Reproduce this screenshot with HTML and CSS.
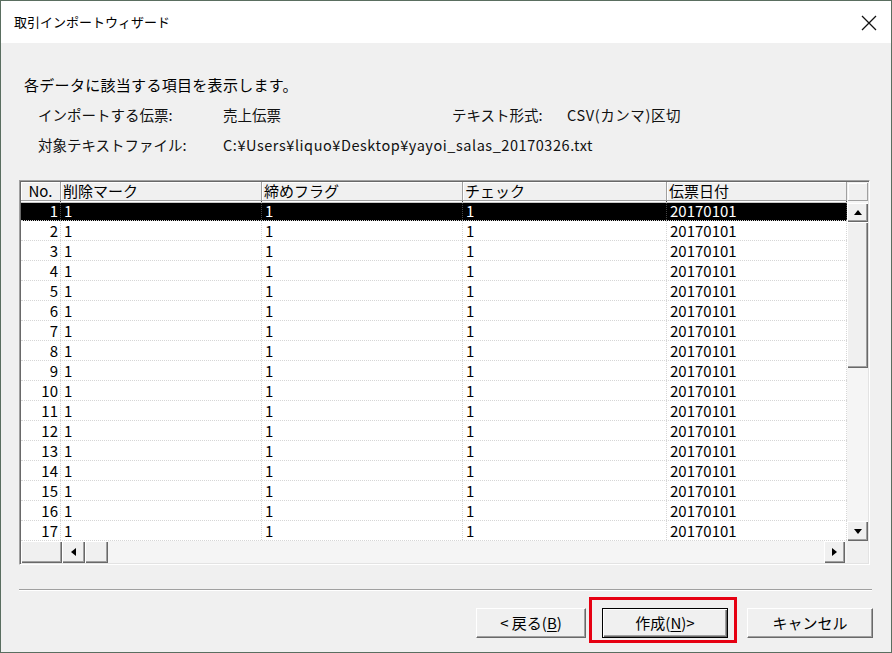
FILE: index.html
```html
<!DOCTYPE html>
<html lang="ja">
<head>
<meta charset="utf-8">
<title>取引インポートウィザード</title>
<link rel="stylesheet" href="styles.css">
</head>
<body>
<div class="window">
  <div class="titlebar">
    <span class="title">取引インポートウィザード</span>
    <svg class="close" width="16" height="16" viewBox="0 0 16 16"><path d="M1 1 L15 15 M15 1 L1 15" stroke="#111" stroke-width="1.3" fill="none"/></svg>
  </div>
  <div class="body">
    <p class="intro">各データに該当する項目を表示します。</p>
    <div class="info">
      <span>インポートする伝票:</span><span>売上伝票</span><span>テキスト形式:</span><span class="csv">CSV(カンマ)区切</span>
    </div>
    <div class="info">
      <span>対象テキストファイル:</span><span class="wide">C:¥Users¥liquo¥Desktop¥yayoi_salas_20170326.txt</span>
    </div>
    <div class="grid">
      <div class="ghead">
        <span class="hc hnum">No.</span><span class="hc">削除マーク</span><span class="hc">締めフラグ</span><span class="hc">チェック</span><span class="hc">伝票日付</span>
      </div>
      <div class="hcorner"></div>
      <div class="rows">
        <div class="row sel"><span class="c num">1</span><span class="c">1</span><span class="c">1</span><span class="c">1</span><span class="c">20170101</span></div>
        <div class="row"><span class="c num">2</span><span class="c">1</span><span class="c">1</span><span class="c">1</span><span class="c">20170101</span></div>
        <div class="row"><span class="c num">3</span><span class="c">1</span><span class="c">1</span><span class="c">1</span><span class="c">20170101</span></div>
        <div class="row"><span class="c num">4</span><span class="c">1</span><span class="c">1</span><span class="c">1</span><span class="c">20170101</span></div>
        <div class="row"><span class="c num">5</span><span class="c">1</span><span class="c">1</span><span class="c">1</span><span class="c">20170101</span></div>
        <div class="row"><span class="c num">6</span><span class="c">1</span><span class="c">1</span><span class="c">1</span><span class="c">20170101</span></div>
        <div class="row"><span class="c num">7</span><span class="c">1</span><span class="c">1</span><span class="c">1</span><span class="c">20170101</span></div>
        <div class="row"><span class="c num">8</span><span class="c">1</span><span class="c">1</span><span class="c">1</span><span class="c">20170101</span></div>
        <div class="row"><span class="c num">9</span><span class="c">1</span><span class="c">1</span><span class="c">1</span><span class="c">20170101</span></div>
        <div class="row"><span class="c num">10</span><span class="c">1</span><span class="c">1</span><span class="c">1</span><span class="c">20170101</span></div>
        <div class="row"><span class="c num">11</span><span class="c">1</span><span class="c">1</span><span class="c">1</span><span class="c">20170101</span></div>
        <div class="row"><span class="c num">12</span><span class="c">1</span><span class="c">1</span><span class="c">1</span><span class="c">20170101</span></div>
        <div class="row"><span class="c num">13</span><span class="c">1</span><span class="c">1</span><span class="c">1</span><span class="c">20170101</span></div>
        <div class="row"><span class="c num">14</span><span class="c">1</span><span class="c">1</span><span class="c">1</span><span class="c">20170101</span></div>
        <div class="row"><span class="c num">15</span><span class="c">1</span><span class="c">1</span><span class="c">1</span><span class="c">20170101</span></div>
        <div class="row"><span class="c num">16</span><span class="c">1</span><span class="c">1</span><span class="c">1</span><span class="c">20170101</span></div>
        <div class="row"><span class="c num">17</span><span class="c">1</span><span class="c">1</span><span class="c">1</span><span class="c">20170101</span></div>
      </div>
      <div class="vscroll">
        <div class="sbtn arrow"><span class="tri up"></span></div>
        <div class="sbtn vthumb"></div>
        <div class="vtrack"></div>
        <div class="sbtn arrow"><span class="tri down"></span></div>
      </div>
      <div class="hscroll">
        <div class="sbtn hfix"></div>
        <div class="sbtn harrow"><span class="tri left"></span></div>
        <div class="sbtn hthumb"></div>
        <div class="htrack"></div>
        <div class="sbtn harrow"><span class="tri right"></span></div>
      </div>
      <div class="bcorner"></div>
    </div>
    <div class="sep"></div>
    <div class="buttons">
      <button class="btn back">&lt; 戻る(<u>B</u>)</button>
      <div class="mark"><button class="btn def">作成(<u>N</u>)&gt;</button></div>
      <button class="btn cancel">キャンセル</button>
    </div>
  </div>
</div>
</body>
</html>
```

FILE: styles.css
```css
* { box-sizing: border-box; }
html, body { margin: 0; padding: 0; }
body {
  width: 892px;
  height: 653px;
  font-family: "Noto Sans CJK JP", "Noto Sans", sans-serif;
  color: #000;
  background: #f0f0f0;
  overflow: hidden;
}
.window {
  width: 892px;
  height: 653px;
  border: 1px solid #5a6e60;
  display: flex;
  flex-direction: column;
  background: #f0f0f0;
}
.titlebar {
  height: 42px;
  flex: none;
  background: #fff;
  display: flex;
  align-items: center;
  justify-content: space-between;
  padding: 0 14px 0 13px;
}
.title {
  font-size: 13px;
  line-height: 18px;
}
.close { display: block; margin-top: 1px; }
.body {
  flex: 1;
  display: flex;
  flex-direction: column;
  padding: 32px 0 0 0;
}
.intro {
  margin: 0 0 10px 23px;
  font-size: 15px;
  line-height: 20px;
  letter-spacing: 0.3px;
}
.info {
  margin: 0 0 10px 37px;
  display: grid;
  grid-template-columns: 185px 229px 115px auto;
  font-size: 14.5px;
  line-height: 20px;
  color: #111;
}
.info .wide { grid-column: 2 / 5; letter-spacing: 0.55px; }
.info .csv { letter-spacing: 0.6px; }
.grid {
  margin: 15px 0 0 18px;
  width: 851px;
  display: grid;
  grid-template-columns: 826px 21px;
  grid-template-rows: 19px 340px 22px;
  border: 1px solid;
  border-color: #a0a0a0 #fff #fff #a0a0a0;
  box-shadow: inset 1px 1px 0 #696969, inset -1px -1px 0 #e3e3e3;
  padding: 1px;
  background: #f0f0f0;
}
.ghead, .row {
  display: grid;
  grid-template-columns: 40px 201px 201px 204px 180px;
}
.ghead { background: #f0f0f0; }
.hc {
  font-size: 15px;
  line-height: 18px;
  padding-left: 2px;
  border-right: 1px solid #a0a0a0;
  border-bottom: 1px solid #a0a0a0;
  box-shadow: inset 1px 1px 0 #fff;
  white-space: nowrap;
}
.hnum { text-align: center; padding-left: 0; }
.hcorner {
  border-bottom: 1px solid #a0a0a0;
  border-right: 1px solid #a0a0a0;
  box-shadow: inset 1px 1px 0 #fff;
  margin-left: 1px;
  margin-top: 1px;
}
.rows { background: #fff; }
.row {
  height: 20px;
  border-bottom: 1px dotted #d6d6d6;
}
.c {
  font-size: 15px;
  line-height: 19px;
  padding-left: 3px;
  border-right: 1px dotted #d6d6d6;
  white-space: nowrap;
}
.c.num { text-align: right; padding-left: 0; padding-right: 2px; }
.row.sel {
  background: #000;
  color: #fff;
  box-shadow: inset 0 1px 0 #fff, inset 0 2px 0 #c8c8c8;
}
.row.sel .c { border-right-color: #444; }
.vscroll {
  display: flex;
  flex-direction: column;
  background: #f5f5f5;
}
.sbtn {
  background: #f0f0f0;
  box-shadow: inset 1px 1px 0 #fff, inset -1px -1px 0 #696969, inset -2px -2px 0 #a0a0a0;
  display: flex;
  align-items: center;
  justify-content: center;
}
.arrow { height: 20px; flex: none; }
.vscroll .arrow:first-child { margin-top: 2px; height: 19px; }
.vthumb { height: 146px; flex: none; }
.vtrack { flex: 1; }
.hscroll {
  display: flex;
  background: #f5f5f5;
}
.hfix { width: 41px; flex: none; }
.harrow { width: 23px; flex: none; }
.hthumb { width: 23px; flex: none; }
.htrack { flex: 1; }
.hscroll .harrow:last-child { margin-right: 2px; width: 21px; }
.bcorner { background: #f0f0f0; }
.tri { width: 0; height: 0; border-style: solid; }
.tri.up { border-width: 0 4px 5px 4px; border-color: transparent transparent #000 transparent; }
.tri.down { border-width: 5px 4px 0 4px; border-color: #000 transparent transparent transparent; }
.tri.left { border-width: 4px 5px 4px 0; border-color: transparent #000 transparent transparent; }
.tri.right { border-width: 4px 0 4px 5px; border-color: transparent transparent transparent #000; }
.sep {
  margin: 24px 0 0 18px;
  width: 853px;
  height: 2px;
  border-top: 1px solid #a0a0a0;
  border-bottom: 1px solid #fff;
}
.buttons {
  margin-top: 6px;
  display: flex;
  align-items: flex-start;
  padding-left: 475px;
}
.btn {
  font-family: "Noto Sans CJK JP", "Noto Sans", sans-serif;
  font-size: 15px;
  line-height: 20px;
  height: 30px;
  padding: 0;
  color: #000;
  background: #f0f0f0;
  border: 1px solid;
  border-color: #fff #696969 #696969 #fff;
  box-shadow: inset -1px -1px 0 #a0a0a0;
}
.btn u { text-decoration: underline; text-underline-offset: 2px; }
.back { width: 110px; margin-top: 11px; }
.mark {
  margin-left: 3px;
  border: 3px solid #e60012;
  padding: 8px 6px 2px 10px;
}
.def {
  width: 126px;
  border: 1px solid #000;
  box-shadow: inset 1px 1px 0 #fff, inset -1px -1px 0 #696969, inset -2px -2px 0 #a0a0a0;
}
.cancel { width: 126px; margin-left: 10px; margin-top: 11px; }
```
